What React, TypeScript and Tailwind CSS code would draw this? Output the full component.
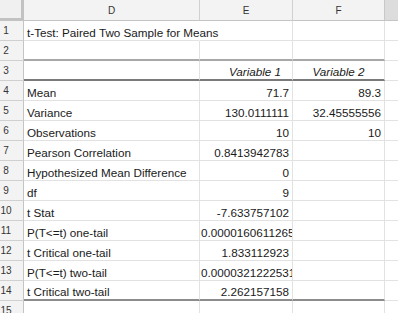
import React from "react";

type Row = {
  n: number;
  label?: string;
  e?: string;
  f?: string;
  kind?: "title" | "head" | "clipE";
};

const rows: Row[] = [
  { n: 1, label: "t-Test: Paired Two Sample for Means", kind: "title" },
  { n: 2 },
  { n: 3, e: "Variable 1", f: "Variable 2", kind: "head" },
  { n: 4, label: "Mean", e: "71.7", f: "89.3" },
  { n: 5, label: "Variance", e: "130.0111111", f: "32.45555556" },
  { n: 6, label: "Observations", e: "10", f: "10" },
  { n: 7, label: "Pearson Correlation", e: "0.8413942783" },
  { n: 8, label: "Hypothesized Mean Difference", e: "0" },
  { n: 9, label: "df", e: "9" },
  { n: 10, label: "t Stat", e: "-7.633757102" },
  { n: 11, label: "P(T<=t) one-tail", e: "0.0000160611265", kind: "clipE" },
  { n: 12, label: "t Critical one-tail", e: "1.833112923" },
  { n: 13, label: "P(T<=t) two-tail", e: "0.00003212225317", kind: "clipE" },
  { n: 14, label: "t Critical two-tail", e: "2.262157158" },
  { n: 15 },
];

// bottom edge of each data row: ordinary grid line or one of the table rules
function bottomEdge(n: number): string {
  if (n === 2) return "border-b-2 border-b-[#a8a8a8]";
  if (n === 3) return "border-b-2 border-b-[#7a7a7a]";
  if (n === 14) return "border-b-2 border-b-[#8c8c8c]";
  return "border-b border-b-[#e2e2e2]";
}

function DataRow({ row }: { row: Row }) {
  const tableCell = row.n >= 2 && row.n <= 14;
  const edge = tableCell ? bottomEdge(row.n) : "border-b border-b-[#e2e2e2]";
  return (
    <>
      <div className="h-[20px] bg-[#f3f3f3] border-r border-r-[#c4c4c4] border-b border-b-[#d0d0d0] flex items-center text-[10px] text-[#333]">
        <span className="w-[12px] text-center">{row.n}</span>
      </div>
      <div
        className={`h-[20px] border-r ${row.kind === "title" ? "border-r-transparent" : "border-r-[#e2e2e2]"} ${edge} flex items-end pl-[3px] whitespace-nowrap overflow-visible`}
      >
        <span className="leading-[15px]">{row.label}</span>
      </div>
      <div
        className={`h-[20px] border-r border-r-[#e2e2e2] ${edge} flex items-end whitespace-nowrap overflow-hidden ${
          row.kind === "head"
            ? "justify-center italic pl-[18px]"
            : row.kind === "clipE"
              ? "justify-start pl-[1px]"
              : "justify-end pr-[3px]"
        }`}
      >
        <span className="leading-[15px]">{row.e}</span>
      </div>
      <div
        className={`h-[20px] border-r border-r-[#e2e2e2] ${edge} flex items-end whitespace-nowrap overflow-hidden ${
          row.kind === "head" ? "justify-center italic" : "justify-end pr-[3px]"
        }`}
      >
        <span className="leading-[15px]">{row.f}</span>
      </div>
      <div className="h-[20px] border-b border-b-[#e2e2e2] bg-white" />
    </>
  );
}

export default function App() {
  return (
    <div className="w-[398px] h-[313px] overflow-hidden bg-white font-['Liberation_Sans',Arial,sans-serif] text-[11.7px] text-[#1a1a1a]">
      <div className="grid grid-cols-[24px_176px_93px_92px_1fr]">
        {/* column header strip */}
        <div className="h-[21px] bg-[#f0f0f0] border-r-[3px] border-r-[#c2c2c2] border-b-[3px] border-b-[#c2c2c2]" />
        <div className="h-[21px] bg-[#f3f3f3] border-r border-r-[#d0d0d0] border-b border-b-[#c4c4c4] flex items-center justify-center text-[10px] text-[#333]">
          D
        </div>
        <div className="h-[21px] bg-[#f3f3f3] border-r border-r-[#d0d0d0] border-b border-b-[#c4c4c4] flex items-center justify-center text-[10px] text-[#333]">
          E
        </div>
        <div className="h-[21px] bg-[#f3f3f3] border-r border-r-[#c8c8c8] border-b border-b-[#c4c4c4] flex items-center justify-center text-[10px] text-[#333]">
          F
        </div>
        <div className="h-[21px] bg-[#dcdcdc] border-b border-b-[#c4c4c4]" />

        {rows.map((r) => (
          <DataRow key={r.n} row={r} />
        ))}
      </div>
    </div>
  );
}
